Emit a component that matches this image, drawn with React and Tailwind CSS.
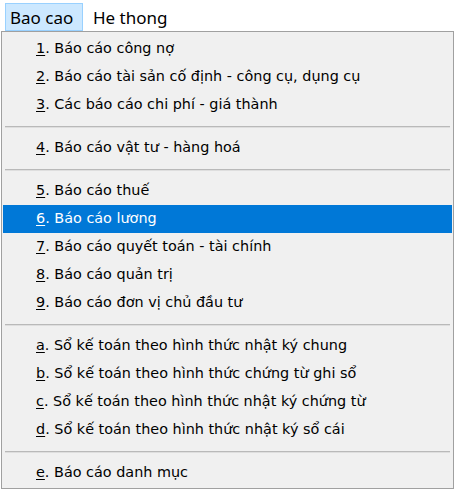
import React from "react";

const items = [
  { k: "1", t: "Báo cáo công nợ" },
  { k: "2", t: "Báo cáo tài sản cố định - công cụ, dụng cụ" },
  { k: "3", t: "Các báo cáo chi phí - giá thành" },
  { sep: true },
  { k: "4", t: "Báo cáo vật tư - hàng hoá" },
  { sep: true },
  { k: "5", t: "Báo cáo thuế" },
  { k: "6", t: "Báo cáo lương", active: true },
  { k: "7", t: "Báo cáo quyết toán - tài chính" },
  { k: "8", t: "Báo cáo quản trị" },
  { k: "9", t: "Báo cáo đơn vị chủ đầu tư" },
  { sep: true },
  { k: "a", t: "Sổ kế toán theo hình thức nhật ký chung" },
  { k: "b", t: "Sổ kế toán theo hình thức chứng từ ghi sổ" },
  { k: "c", t: "Sổ kế toán theo hình thức nhật ký chứng từ" },
  { k: "d", t: "Sổ kế toán theo hình thức nhật ký sổ cái" },
  { sep: true },
  { k: "e", t: "Báo cáo danh mục" },
];

export default function App() {
  return (
    <div className="w-[454px] h-[489px] bg-white overflow-hidden">
      <div className="h-[31px] flex items-start pl-[5px] pt-[3px] font-['Noto_Sans',sans-serif] text-[17px] text-black">
        <div className="w-[78px] h-[28px] flex items-center pl-[4px] bg-[#cce8ff] border border-[#99d1ff] leading-none">
          Bao cao
        </div>
        <div className="h-[28px] pl-[10px] flex items-center leading-none">He thong</div>
      </div>
      <div className="ml-px w-[453px] h-[458px] bg-[#f0f0f0] border border-[#a0a0a0] pt-[3px] font-['DejaVu_Sans',sans-serif] text-[14.4px]">
        {items.map((it, i) =>
          it.sep ? (
            <div key={i} className="h-[15px] flex flex-col pt-[7px] px-[3px]">
              <div className="h-px bg-[#b9b9b9]" />
              <div className="h-px bg-[#dedede]" />
            </div>
          ) : (
            <div
              key={i}
              className={
                "h-[28px] mx-px flex items-center pl-[33px] whitespace-nowrap " +
                (it.active ? "bg-[#0078d7] text-white" : "text-black")
              }
            >
              <span className="underline underline-offset-[2px]">{it.k}</span>
              <span>. {it.t}</span>
            </div>
          )
        )}
      </div>
    </div>
  );
}
